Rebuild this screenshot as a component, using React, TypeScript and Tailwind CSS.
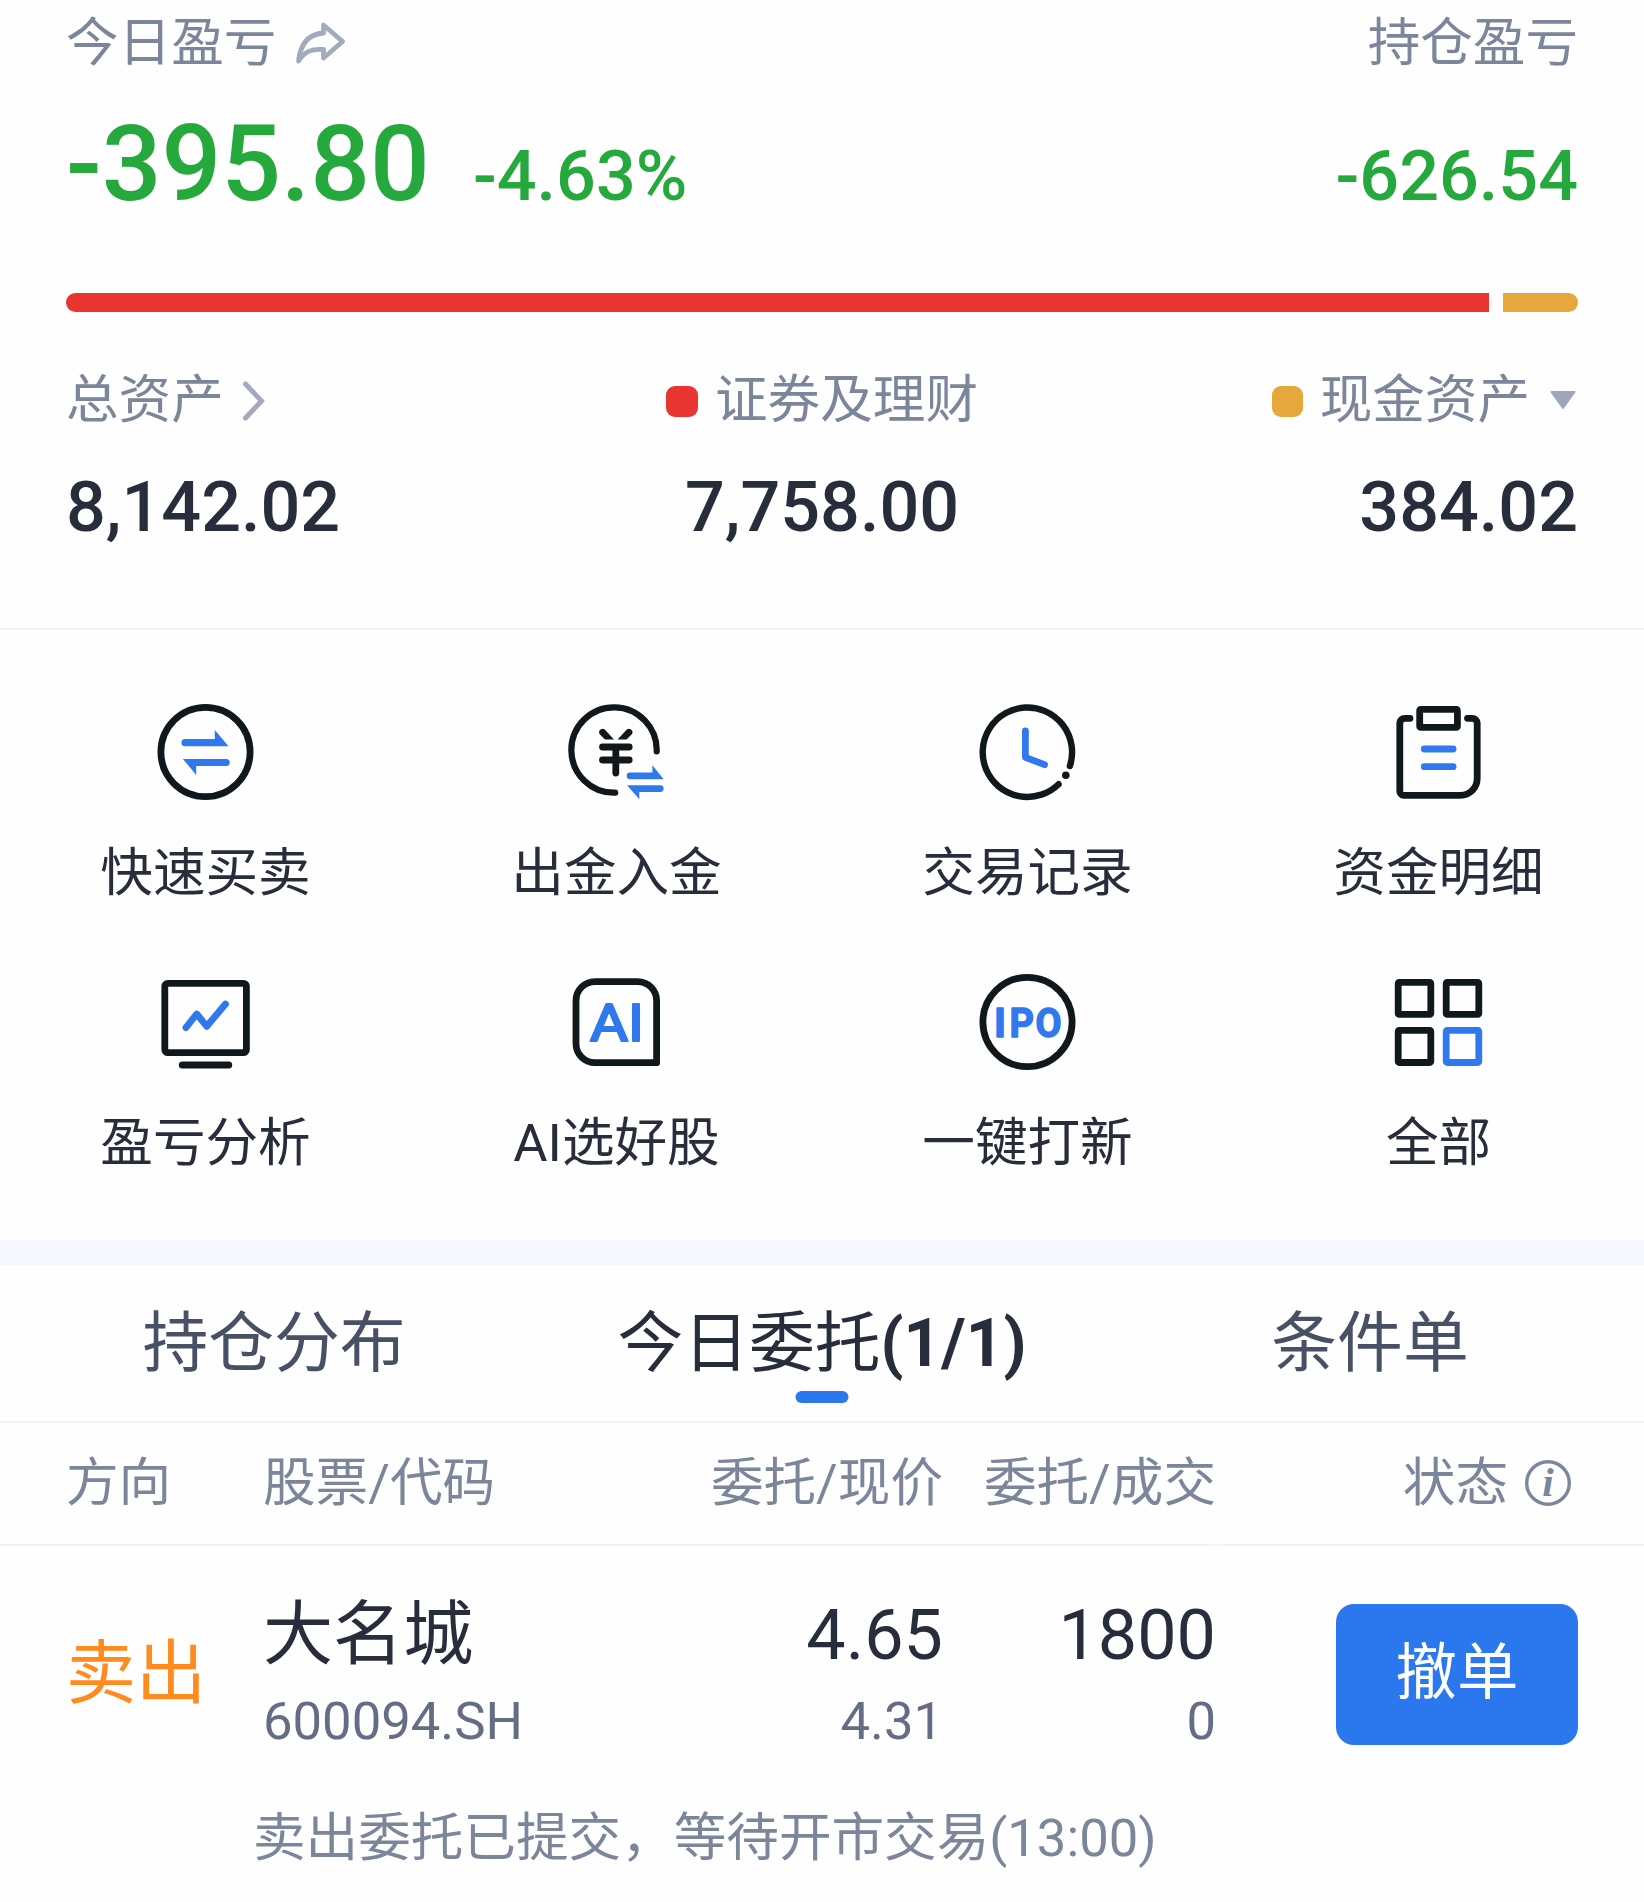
import type { ReactNode } from "react";

const DARK = "#11181c";
const BLUE = "#3078ed";

function Icon({ children }: { children: ReactNode }) {
  return (
    <svg
      viewBox="0.5 0 100 100"
      className="w-[100px] h-[100px]"
      fill="none"
      stroke={DARK}
      strokeWidth={6.8}
      strokeLinecap="round"
      strokeLinejoin="round"
    >
      {children}
    </svg>
  );
}

const actions = [
  {
    label: "快速买卖",
    icon: (
      <Icon>
        <circle cx="50" cy="50" r="44.6" />
        <g fill={BLUE} stroke="none">
          <path d="M29.5 37.1H59.3V28L73 44.2H29.5a3.55 3.55 0 0 1 0-7.1Z" />
          <path d="M70.7 64H40.7V73L27.4 56.9H70.7a3.55 3.55 0 0 1 0 7.1Z" />
        </g>
      </Icon>
    ),
  },
  {
    label: "出金入金",
    icon: (
      <Icon>
        <path strokeWidth={6.2} d="M90.2 49.5A42.7 42.7 0 1 0 48.7 90.7" />
        <path fill={DARK} stroke="none" d="M33 32a3.6 3.6 0 0 1 6.2-3.6L47.5 37.6H38.5ZM65.6 32a3.6 3.6 0 0 0-6.2-3.6L51.1 37.6H60Z" />
        <path d="M36 45H62.7M36 58H62.7M49.3 45V71" />
        <g fill={BLUE} stroke="none">
          <path d="M63.5 70.5H85.9V63.3L97.2 77.2H63.5a3.35 3.35 0 0 1 0-6.7Z" />
          <path d="M93.8 89.9H72.8V97.2L60.6 83.2H93.8a3.35 3.35 0 0 1 0 6.7Z" />
        </g>
      </Icon>
    ),
  },
  {
    label: "交易记录",
    icon: (
      <Icon>
        <path d="M92.4 64A44.7 44.7 0 1 0 81.1 82.2" strokeWidth={6.4} />
        <circle cx="88.3" cy="73.2" r="3.8" fill={DARK} stroke="none" />
        <path stroke={BLUE} d="M47.9 29V55.3L67 62.7" />
      </Icon>
    ),
  },
  {
    label: "资金明细",
    icon: (
      <Icon>
        <path d="M21.5 16.3H16.3a5 5 0 0 0-5 5V89.3a4 4 0 0 0 4 4H72A16.7 16.7 0 0 0 88.7 76.6V21.3a5 5 0 0 0-5-5H79" />
        <rect x="31.2" y="7.4" width="37.7" height="18" rx="1" />
        <path stroke={BLUE} d="M35.8 47H64.6M35.8 64.7H64.6" />
      </Icon>
    ),
  },
  {
    label: "盈亏分析",
    icon: (
      <Icon>
        <rect x="9.3" y="11.4" width="81.6" height="69.3" rx="3" />
        <path d="M26.8 93H73.2" strokeWidth={7} />
        <path stroke={BLUE} d="M30.4 55.7L41.2 42L51.3 54.3L70 32" />
      </Icon>
    ),
  },
  {
    label: "AI选好股",
    icon: (
      <Icon>
        <path d="M28.5 9.6H71A19 19 0 0 1 90.1 28.6V90.7H28.5A19 19 0 0 1 9.5 71.7V28.6A19 19 0 0 1 28.5 9.6Z" />
        <text
          x="23.5"
          y="69"
          fontSize="51"
          fontWeight="400"
          fontFamily="Roboto, sans-serif"
          fill={BLUE}
          stroke={BLUE}
          strokeWidth={2.2}
          textLength="54"
          lengthAdjust="spacingAndGlyphs"
        >
          AI
        </text>
      </Icon>
    ),
  },
  {
    label: "一键打新",
    icon: (
      <Icon>
        <circle cx="50" cy="50" r="44.6" />
        {/* IPO, each letter narrowed and spaced apart */}
        <g fill={BLUE} stroke={BLUE} strokeWidth={1.4} fontSize="40.5" fontWeight="700" fontFamily="Roboto, sans-serif">
          <text x="16.5" y="64.8" textLength="12" lengthAdjust="spacingAndGlyphs">
            I
          </text>
          <text x="32" y="64.8" textLength="24.5" lengthAdjust="spacingAndGlyphs">
            P
          </text>
          <text x="58" y="64.8" textLength="26" lengthAdjust="spacingAndGlyphs">
            O
          </text>
        </g>
      </Icon>
    ),
  },
  {
    label: "全部",
    icon: (
      <Icon>
        <rect x="9.7" y="10.3" width="32.6" height="32.1" rx="1" />
        <rect x="57.7" y="10.3" width="32.6" height="32.1" rx="1" />
        <rect x="9.7" y="58.4" width="32.6" height="32.1" rx="1" />
        <rect x="57.7" y="58.4" width="32.6" height="32.1" rx="1" stroke={BLUE} />
      </Icon>
    ),
  },
];

function Summary() {
  return (
    <section className="px-[66px]">
      {/* Profit and loss */}
      <div className="flex h-[87px] items-center justify-between text-[52.6px] text-[#7c869b]">
        <div className="flex items-center">
          <span>今日盈亏</span>
          <svg viewBox="0 0 50 46" className="ml-[19px] h-[46px] w-[50px]" fill="none">
            <path
              d="M3.5 41C5.5 23 14 14 28.5 13V5L47.5 21.5L28.5 38V29.5C17 28.5 10 31 3.5 41Z"
              stroke="#a3aabd"
              strokeWidth={4.8}
              strokeLinejoin="round"
            />
          </svg>
        </div>
        <span>持仓盈亏</span>
      </div>
      <div className="mt-[17px] flex h-[120px] items-baseline font-medium leading-[120px] text-[#26a93c]">
        <span className="text-[105.2px]">-395.80</span>
        <span className="ml-[43px] text-[70.1px]">-4.63%</span>
        <span className="ml-auto text-[70.1px]">-626.54</span>
      </div>

      {/* Allocation bar */}
      <div className="mt-[69px] flex h-[19px] gap-[14px]">
        <div className="flex-1 rounded-l-full bg-[#e93430]" />
        <div className="w-[75px] rounded-r-full bg-[#e6a73c]" />
      </div>

      {/* Assets */}
      <div className="mt-12 grid h-20 grid-cols-3 items-center text-[52.6px] leading-[80px] text-[#7c869b]">
        <div className="flex items-center">
          <span>总资产</span>
          <svg viewBox="0 0 26 42" className="ml-[17px] mt-0.5 h-[42px] w-[26px]" fill="none">
            <path d="M4.5 4L20.5 21L4.5 38" stroke="#a3aabd" strokeWidth={5} strokeLinecap="round" />
          </svg>
        </div>
        <div className="flex items-center justify-center gap-[17px]">
          <i className="mt-[3px] h-[31px] w-8 rounded-[9px] bg-[#e93430]" />
          <span>证券及理财</span>
        </div>
        <div className="flex items-center justify-end">
          <i className="mt-[3px] mr-[17px] h-[31px] w-[31px] rounded-[9px] bg-[#e6a73c]" />
          <span>现金资产</span>
          <svg viewBox="0 0 28 20" className="mr-px ml-[19px] h-5 w-7" fill="#9fa6bb" stroke="#9fa6bb" strokeLinejoin="round">
            <path d="M2.5 2H25.5L14 18Z" strokeWidth={2} />
          </svg>
        </div>
      </div>
      <div className="mt-4 grid h-[100px] grid-cols-3 text-[70.1px] font-medium leading-[102px] text-[#282d3c]">
        <span>8,142.02</span>
        <span className="text-center">7,758.00</span>
        <span className="text-right">384.02</span>
      </div>
    </section>
  );
}

function Actions() {
  return (
    <section className="grid grid-cols-4 gap-y-[69px] pt-[72px] pb-[67px]">
      {actions.map((action) => (
        <div key={action.label} className="flex flex-col items-center">
          {action.icon}
          <span className="mt-[41px] text-[52.6px] leading-[60px] text-[#282d3c]">{action.label}</span>
        </div>
      ))}
    </section>
  );
}

function Orders() {
  return (
    <section>
      <div className="grid h-[158px] grid-cols-3 border-b-2 border-[#f1f2f8] text-center text-[65.8px] leading-[158px] text-[#485065]">
        <span>持仓分布</span>
        <div className="relative text-[#282d3c]">
          今日委托<b className="font-bold">(1/1)</b>
          <div className="absolute bottom-5 left-1/2 h-3 w-[53px] -translate-x-1/2 rounded-full bg-[#2b78ee]" />
        </div>
        <span>条件单</span>
      </div>

      <div className="grid h-[121px] grid-cols-[197px_379px_301px_273px_362px] pl-[66px] text-[52.6px] leading-[121px] text-[#7c869b]">
        <span>方向</span>
        <span>股票/代码</span>
        <span className="text-right">委托/现价</span>
        <span className="text-right">委托/成交</span>
        <div className="flex items-center justify-end">
          <span>状态</span>
          <svg viewBox="0 0 48 48" className="mb-0.5 ml-4 mr-1.5 h-12 w-12" fill="none">
            <circle cx="24" cy="24" r="21.3" stroke="#7c869b" strokeWidth={3.4} />
            <text
              x="24"
              y="37"
              textAnchor="middle"
              fontSize="41"
              fontWeight="700"
              fontStyle="italic"
              fontFamily="Liberation Serif, serif"
              fill="#7c869b"
            >
              i
            </text>
          </svg>
        </div>
      </div>
      <div className="flex h-0.5 gap-0.5">
        <div className="w-[1215px] bg-[#f1f2f8]" />
        <div className="flex-1 bg-[#f1f2f8]" />
      </div>

      <div className="grid grid-cols-[197px_379px_301px_273px_362px] items-start pl-[66px] pt-[46px]">
        <span className="text-[70.1px] leading-[165px] text-[#ff8a1e]">卖出</span>
        <div>
          <div className="text-[70.1px] leading-[87px] text-[#282d3c]">大名城</div>
          <div className="text-[52.6px] leading-[84px] text-[#656d84]">600094.SH</div>
        </div>
        <div className="text-right">
          <div className="text-[70.1px] leading-[87px] text-[#282d3c]">4.65</div>
          <div className="text-[52.6px] leading-[84px] text-[#656d84]">4.31</div>
        </div>
        <div className="text-right">
          <div className="text-[70.1px] leading-[87px] text-[#282d3c]">1800</div>
          <div className="text-[52.6px] leading-[84px] text-[#656d84]">0</div>
        </div>
        <button className="mt-3 h-[141px] w-[242px] justify-self-end rounded-[18px] bg-[#2b78ee] pb-0.5 text-[61.4px] text-white">
          撤单
        </button>
      </div>
      <p className="mt-[35px] pl-[253px] text-[52.6px] leading-[80px] text-[#7c869b]">
        卖出委托已提交，等待开市交易(13:00)
      </p>
    </section>
  );
}

export default function App() {
  return (
    <main className="h-[1902px] w-[1644px] overflow-hidden bg-[#fefeff] font-[Roboto,'Noto_Sans_CJK_SC',sans-serif]">
      <Summary />
      <div className="mt-[72px] h-0.5 bg-[#f1f2f8]" />
      <Actions />
      <div className="h-[25px] bg-[#f6f7ff]" />
      <Orders />
    </main>
  );
}
